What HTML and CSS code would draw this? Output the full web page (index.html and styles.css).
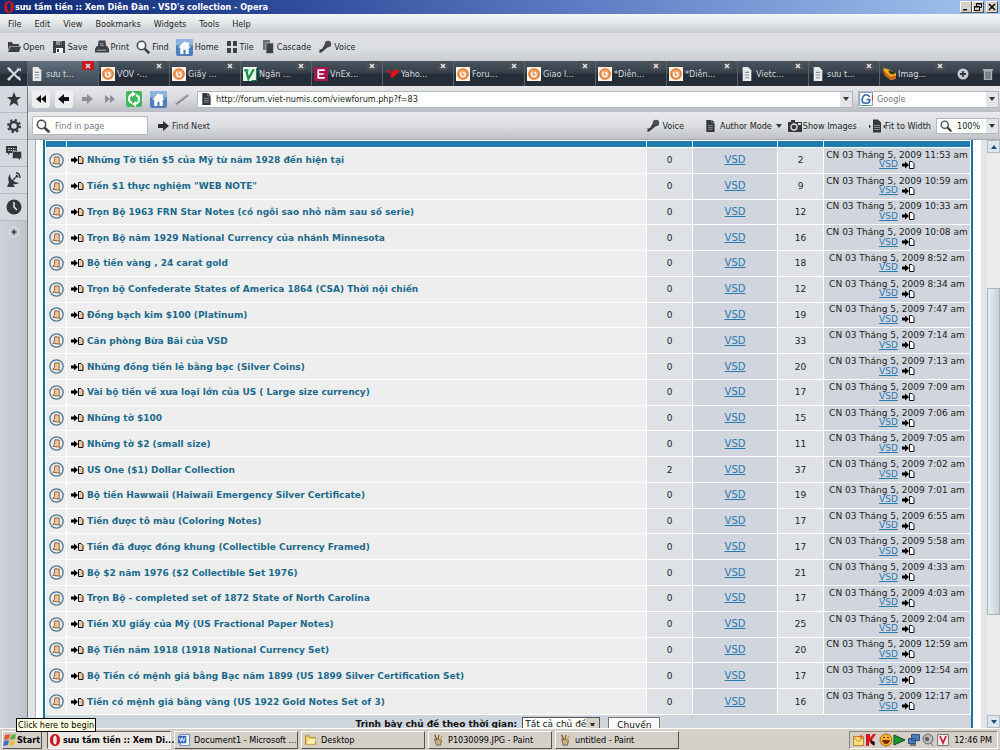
FILE: index.html
```html
<!DOCTYPE html>
<html lang="vi">
<head>
<meta charset="utf-8">
<title>sưu tầm tiền :: Xem Diễn Đàn - VSD's collection - Opera</title>
<link rel="stylesheet" href="styles.css">
</head>
<body>
<svg class="defs" aria-hidden="true">
  <symbol id="opera" viewBox="0 0 12 12"><path fill="#c8171e" fill-rule="evenodd" d="M6 0C9 0 11 2.500 11 6S9 12 6 12 1 9.500 1 6 3 0 6 0ZM6 1.500C4.700 1.500 4.200 3.500 4.200 6S4.700 10.500 6 10.500 7.800 8.500 7.800 6 7.300 1.500 6 1.500Z"/></symbol>
  <symbol id="folder" viewBox="0 0 14 12"><path fill="#3d4146" d="M1 1h4l1 2h6v2H3L1 9ZM3.500 5.500H14L12 11H1Z"/></symbol>
  <symbol id="save" viewBox="0 0 14 14"><path fill="#3d4146" d="M1 1h12v12H1Z"/><path fill="#f4f5f6" d="M4 8h7v5H4Z"/><path fill="#8d9299" d="M4 1h6v4H4Z"/><path fill="#3d4146" d="M8 2h1.500v2.500H8ZM5 9h2v3H5Z"/></symbol>
  <symbol id="printer" viewBox="0 0 15 14"><path fill="#3d4146" d="M4 0h7l1 6h1l2 3v4H0V9l2-3h1Z"/><path fill="#a9adb3" d="M5 3h4v1H5ZM5 5h5v1H5ZM2 10h10v1H2Z"/></symbol>
  <symbol id="lens" viewBox="0 0 14 14"><circle cx="5.500" cy="5.500" r="4.200" fill="#f7f8f9" stroke="#4a4e54" stroke-width="1.600"/><path stroke="#3d4146" stroke-width="2.600" stroke-linecap="round" d="m9.300 9.300 3.200 3.200"/></symbol>
  <symbol id="home" viewBox="0 0 16 16"><rect width="16" height="16" rx="2" fill="#4b7fbd"/><path fill="#8db3de" d="M0 2q0-2 2-2h12q2 0 2 2v4H0Z"/><path fill="#fff" d="M8 2 2 8h2v6h3v-4h2v4h3V8h2l-2-2V3h-2v1Z"/></symbol>
  <symbol id="tile" viewBox="0 0 12 12"><path fill="#3d4146" d="M1 0h4v5H1ZM7 0h4v5H7ZM1 7h4v5H1ZM7 7h4v5H7Z"/></symbol>
  <symbol id="cascade" viewBox="0 0 12 14"><path fill="#6d7278" d="M1 0h7v10H1Z"/><path fill="#3d4146" stroke="#c9ccd1" stroke-width=".7" d="M4 3h7.500v10.500H4Z"/></symbol>
  <symbol id="mic" viewBox="0 0 14 14"><circle cx="10" cy="4" r="3.200" fill="#4a4e54"/><path fill="#3d4146" d="m7 4 3 3-6 5-2 1-1-1 1-2H0l4-1Z"/></symbol>
  <symbol id="tools" viewBox="0 0 16 16"><path stroke="#d4d8dd" stroke-width="2" fill="none" d="m3 3 10 10M13 3 3 13"/><path fill="#d4d8dd" d="m1 2 2-1 3 3-2 2ZM11 1l1 3 3 1v-3l-2 1ZM11 12l2-2 2 3-1 2ZM1 13l2-2 2 2-2 2Z"/></symbol>
  <symbol id="page" viewBox="0 0 10 13"><path fill="#e9ebed" d="M1 0h5l3 3v10H1Z"/><path stroke="#858b92" d="M3 5h4M3 7.500h4M3 10h4"/></symbol>
  <symbol id="darkpage" viewBox="0 0 10 13"><path fill="#34383d" d="M1 0h5l4 4v9H1Z"/><path stroke="#a2a7ad" stroke-width=".8" d="M3 6h5M3 8h5M3 10h5M7 0v3h3"/></symbol>
  <symbol id="orange" viewBox="0 0 13 13"><path fill="#fff3e4" d="M0 0h13v13H0Z"/><circle cx="6.500" cy="6.500" r="4.800" fill="#f0a468" stroke="#e0702a" stroke-width="1.200"/><path fill="none" stroke="#fff" stroke-width="1.200" d="M4.500 4.500v2.500q0 2 2 2t2-2-2-2"/></symbol>
  <symbol id="greenv" viewBox="0 0 13 13"><path fill="#e9f6ec" d="M0 0h13v13H0Z"/><path fill="none" stroke="#148a43" stroke-width="2" d="M1 3h4M3 3l2 8 5-9"/><path stroke="#148a43" fill="none" d="M8 12.500h4.500V1"/></symbol>
  <symbol id="express" viewBox="0 0 13 13"><path fill="#a5174c" d="M0 0h13v13H0Z"/><path fill="none" stroke="#fff" stroke-width="1.600" d="M10 3H4v7h6M4 6.500h5"/></symbol>
  <symbol id="yahoo" viewBox="0 0 13 10"><path fill="#d9141b" d="M0 2h5l1 2 2-3h5l-1 3-5 5-2-2 1-2Z"/></symbol>
  <symbol id="shoe" viewBox="0 0 13 13"><path fill="#f0b41c" d="m1 1 5 1 7 4v5l-5 1-5-4Z"/><path fill="#c8641c" d="m1 3 7 6 5-1v3l-5 1-6-5Z"/><path fill="#342a1a" d="m6 3 6 2-1 2-4-1Z"/></symbol>
  <symbol id="add" viewBox="0 0 12 12"><circle cx="6" cy="6" r="5.500" fill="#c8ccd1"/><path stroke="#2d353e" stroke-width="1.800" d="M6 3v6M3 6h6"/></symbol>
  <symbol id="trash" viewBox="0 0 11 13"><path fill="#a9afb6" d="M0 1h11v2H0ZM1 3h9v10H1Z"/><path stroke="#49525c" d="M3.500 4v8M5.500 4v8M7.500 4v8"/></symbol>
  <symbol id="star" viewBox="0 0 16 16"><path fill="#34383d" d="m8 1 2 5h5l-4 3.500 1.500 5.500L8 12l-4.500 3L5 9.500 1 6h5Z"/></symbol>
  <symbol id="gear" viewBox="0 0 16 16"><circle cx="8" cy="8" r="4" fill="none" stroke="#34383d" stroke-width="2.400"/><circle cx="8" cy="8" r="6" fill="none" stroke="#34383d" stroke-width="2" stroke-dasharray="2.300 2.412"/></symbol>
  <symbol id="chat" viewBox="0 0 16 16"><path fill="#34383d" d="M0 1h11v7H4L2 10V8H0Z"/><path fill="#34383d" stroke="#c7cad0" stroke-width=".6" d="M6.500 6.500h9v7H14v2l-2-2H6.500Z"/><path stroke="#c7cad0" stroke-dasharray="1.500 1" d="M2 3.500h8M2 5.500h8"/></symbol>
  <symbol id="dish" viewBox="0 0 16 16"><path fill="#34383d" d="M4 2q0 8 9 9-3 2-6 1l2 3H1l2-5Q1 6 4 2Z"/><path stroke="#34383d" stroke-width="1.300" fill="none" d="m6 9 5-5M10 1q4 0 4 5M10 3.500q2 0 2 2"/></symbol>
  <symbol id="clock" viewBox="0 0 16 16"><circle cx="8" cy="8" r="7.500" fill="#34383d"/><path fill="none" stroke="#fff" stroke-width="1.300" d="M8 3v5l3 3"/></symbol>
  <symbol id="plus" viewBox="0 0 12 12"><circle cx="6" cy="6" r="5" fill="#c6c9d0" stroke="#dfe1e5"/><path stroke="#34383d" stroke-width="1.500" d="M6 3.500v5M3.500 6h5"/></symbol>
  <symbol id="rewind" viewBox="0 0 12 12"><path fill="#111" d="M6 2v8L1 6ZM11 2v8L6 6Z"/></symbol>
  <symbol id="forward" viewBox="0 0 12 12"><path fill="#8c9096" d="M1 2v8l5-4ZM6 2v8l5-4Z"/></symbol>
  <symbol id="left" viewBox="0 0 12 12"><path fill="#111" d="M6 1v3h5v4H6v3L0 6Z"/></symbol>
  <symbol id="right" viewBox="0 0 12 12"><path fill="currentColor" d="M6 1v3H1v4h5v3l6-5Z"/></symbol>
  <symbol id="reload" viewBox="0 0 16 16"><rect width="16" height="16" rx="2" fill="#41b85a"/><path fill="none" stroke="#fff" stroke-width="2" d="M7 3Q3 4 3 8q0 3 3 4M9 13q4-1 4-5 0-3-3-4"/><path fill="#fff" d="M6 0v6l4-3ZM10 10v6l-4-3Z"/></symbol>
  <symbol id="wand" viewBox="0 0 14 14"><path stroke="#85898f" stroke-width="2.200" d="M1 12 13 3"/><path stroke="#c4c7cb" d="M1 11 12 3"/></symbol>
  <symbol id="google" viewBox="0 0 13 13"><path fill="#fff" stroke="#8aa5c9" d="M.5.5h12v12H.5Z"/><path fill="none" stroke="#3562ae" stroke-width="1.500" d="M10 4.500Q9 2.500 6.500 2.500T3 6.500t3.500 4Q10 10.500 10 7H7"/><path stroke="#c54438" d="M12.500 3v5"/><path stroke="#3d9b4b" d="M3 12.500h6"/></symbol>
  <symbol id="camera" viewBox="0 0 14 12"><path fill="#34383d" d="M0 2h3V0h4v2h7v10H0Z"/><circle cx="6" cy="7" r="3" fill="none" stroke="#d9dcdf" stroke-width="1.300"/><path fill="#d9dcdf" d="M10 3h3v2h-3Z"/></symbol>
  <symbol id="fit" viewBox="0 0 16 13"><path fill="#34383d" d="M4 0h5l3 3v10H4ZM0 5l2 2-2 2ZM16 5l-2 2 2 2Z"/><path stroke="#a2a7ad" stroke-width=".8" d="M5 6h6M5 8h6M5 10h6"/></symbol>
  <symbol id="bell" viewBox="0 0 14 14"><circle cx="7" cy="7" r="6.200" fill="#e8ecef" stroke="#51788f" stroke-width="1.200"/><path fill="#f1c498" stroke="#8c6143" stroke-width=".9" d="m5.500 3.500 4 .3V9l1 1.500-7-1L5 8Z"/></symbol>
  <symbol id="jump" viewBox="0 0 14 10"><path fill="#000" d="M1 3.500h3V1.500L8 5 4 8.500v-2H1Z"/><path fill="var(--sheet)" stroke="#111" d="M8.500 1.500h2.500l2 2v5H8.500Z"/></symbol>
  <symbol id="windows" viewBox="0 0 14 14"><path fill="#e4562b" d="m2 2 5-1-1 5-5 1Z"/><path fill="#62a93c" d="m8 2 5-1-1 5-5 1Z"/><path fill="#3c70d0" d="m1 8 5-1-1 5-5 1Z"/><path fill="#eebc2e" d="m7 8 5-1-1 5-5 1Z"/></symbol>
  <symbol id="word" viewBox="0 0 13 13"><path fill="#f7fafc" stroke="#5e83c3" d="M2.500.5h10v12h-10Z"/><path fill="#3668b8" d="M0 2h9v8H0Z"/><path fill="none" stroke="#fff" d="m1.500 4 1.500 4 1.500-4L6 8l1.500-4"/></symbol>
  <symbol id="ydir" viewBox="0 0 13 12"><path fill="#f4d866" stroke="#a68528" d="M.5 1.500h4l1 2h6v7H.5Z"/><path fill="#fff4ae" d="M4 5h8l-2 5H2Z"/></symbol>
  <symbol id="paint" viewBox="0 0 12 14"><path fill="#c8b08a" stroke="#6d5a45" d="m2 6 8 1-1 6H4Z"/><path stroke="#bd3c2d" stroke-width="1.600" d="M5 7 2 1"/><path stroke="#3d8e55" stroke-width="1.600" d="m6 7 1-6"/><path stroke="#e39a2a" stroke-width="1.600" d="m8 7 3-5"/></symbol>
  <symbol id="tray" viewBox="0 0 98 14">
    <path fill="#ffe07a" stroke="#b9862e" d="M1.500 3.500h10v9h-10Z"/><path fill="none" stroke="#b9862e" d="m1.500 4 5 5 5-5"/><path fill="#e8632c" d="m9 1 1 2h2l-2 1 1 2-2-1-2 1 1-2-2-1h2Z"/>
    <path fill="#d41920" d="M14 1h4v4l3-4h3l-4 6 3 5-4-1-2-3v5h-3Z"/><path fill="#111" d="m18 7 5 2-1 4-2-2Z"/>
    <circle cx="34" cy="7" r="6" fill="#f2b52d" stroke="#b1661b"/><path fill="#7d2710" d="M30 7h8q-1 4-4 4t-4-4ZM31 4h2v1h-2ZM35 4h2v1h-2Z"/>
    <path fill="#159b2a" stroke="#0b4914" d="m42 2 11 5-11 5Z"/>
    <path fill="#4b7cc4" stroke="#30507d" d="M59.500 1.500h8v6h-8ZM56.500 5.500h7v5h-7Z"/><path fill="#777" d="M58 11h6v2h-6Z"/>
    <circle cx="76" cy="6" r="5" fill="#b8b8bd" stroke="#64646c"/><circle cx="75" cy="6" r="2" fill="#55555c"/><path stroke="#777" d="m79 10 2 3"/>
    <path fill="#f8e9ea" stroke="#777" d="M85.500 1.500h11v11h-11Z"/><path fill="none" stroke="#c9262e" stroke-width="1.800" d="m88 3 3 7 3-7"/>
  </symbol>
</svg>

<header class="titlebar">
  <svg class="i12"><use href="#opera"/></svg>
  <h1>sưu tầm tiền :: Xem Diễn Đàn - VSD's collection - Opera</h1>
  <div class="winbtns">
    <button aria-label="Minimize"><svg viewBox="0 0 8 8"><path fill="#000" d="M1 6h4v1.500H1Z"/></svg></button>
    <button aria-label="Restore"><svg viewBox="0 0 8 8"><path fill="none" stroke="#000" d="M2.500 3V.5h5v4H6M.5 3.500h5v4h-5ZM.5 4h5M2.500 1h5"/></svg></button>
    <button class="close" aria-label="Close"><svg viewBox="0 0 8 8"><path stroke="#000" stroke-width="1.500" d="m1 1 6 6M7 1 1 7"/></svg></button>
  </div>
</header>
<nav class="menubar">
  <button>File</button><button>Edit</button><button>View</button><button>Bookmarks</button><button>Widgets</button><button>Tools</button><button>Help</button>
</nav>
<div class="toolbar">
  <button><svg class="i14"><use href="#folder"/></svg>Open</button>
  <button><svg class="i14"><use href="#save"/></svg>Save</button>
  <button><svg class="i14"><use href="#printer"/></svg>Print</button>
  <button><svg class="i14"><use href="#lens"/></svg>Find</button>
  <button><svg class="i17"><use href="#home"/></svg>Home</button>
  <button><svg class="i12"><use href="#tile"/></svg>Tile</button>
  <button><svg class="i14"><use href="#cascade"/></svg>Cascade</button>
  <button><svg class="i14"><use href="#mic"/></svg>Voice</button>
</div>
<div class="tabstrip">
  <button class="tabtools" aria-label="Tools"><svg class="i16"><use href="#tools"/></svg></button>
  <div class="tabs" id="tabs"></div>
  <button class="tabend" aria-label="New tab"><svg class="i12"><use href="#add"/></svg></button>
  <button class="tabend" aria-label="Closed tabs"><svg class="i12"><use href="#trash"/></svg></button>
</div>

<div class="main">
  <aside class="panels">
    <button aria-label="Bookmarks"><svg class="i16"><use href="#star"/></svg></button>
    <button aria-label="Settings"><svg class="i16"><use href="#gear"/></svg></button>
    <button aria-label="Chat"><svg class="i16"><use href="#chat"/></svg></button>
    <button aria-label="Feeds"><svg class="i16"><use href="#dish"/></svg></button>
    <button aria-label="History"><svg class="i16"><use href="#clock"/></svg></button>
    <button class="plain" aria-label="Add panel"><svg class="i12"><use href="#plus"/></svg></button>
  </aside>
  <div class="pane">
    <div class="address">
      <button class="nav lit" aria-label="Rewind"><svg class="i12"><use href="#rewind"/></svg></button>
      <button class="nav lit" aria-label="Back"><svg class="i12"><use href="#left"/></svg></button>
      <button class="nav dim" aria-label="Forward"><svg class="i12"><use href="#right"/></svg></button>
      <button class="nav" aria-label="Fast forward"><svg class="i12"><use href="#forward"/></svg></button>
      <button class="nav" aria-label="Reload"><svg class="i16"><use href="#reload"/></svg></button>
      <button class="nav" aria-label="Home"><svg class="i17"><use href="#home"/></svg></button>
      <button class="nav" aria-label="Wand"><svg class="i14"><use href="#wand"/></svg></button>
      <div class="field url"><svg class="i12"><use href="#darkpage"/></svg><input aria-label="Address" value="http://forum.viet-numis.com/viewforum.php?f=83"><button class="drop" aria-label="History list"></button></div>
      <div class="field search"><svg class="i14"><use href="#google"/></svg><input aria-label="Search" placeholder="Google"><button class="drop" aria-label="Engines"></button></div>
    </div>
    <div class="findbar">
      <div class="field find"><svg class="i14"><use href="#lens"/></svg><input aria-label="Find in page" placeholder="Find in page"></div>
      <button class="next"><svg class="i12"><use href="#right"/></svg>Find Next</button>
      <div class="view">
        <button class="voice"><svg class="i14"><use href="#mic"/></svg>Voice</button>
        <button class="mode"><svg class="i12"><use href="#darkpage"/></svg>Author Mode<span class="caret"></span></button>
        <button><svg class="i14"><use href="#camera"/></svg>Show Images</button>
        <button class="fit"><svg class="i16"><use href="#fit"/></svg>Fit to Width</button>
        <div class="field zoom"><svg class="i12"><use href="#lens"/></svg><input aria-label="Zoom" value="100%"><button class="drop" aria-label="Zoom levels"></button></div>
      </div>
    </div>
    <div class="viewport">
      <main class="sheet">
        <div class="forum">
          <table>
            <thead><tr><th></th><th></th><th></th><th></th><th></th><th></th></tr></thead>
            <tbody id="topics"></tbody>
          </table>
          <form class="sort">
            <label for="days">Trình bày chủ đề theo thời gian:</label>
            <select id="days"><option>Tất cả chủ đề</option></select>
            <button type="button">Chuyển</button>
          </form>
        </div>
      </main>
      <div class="scroll"><button class="up" aria-label="Scroll up"></button><div class="thumb"></div><button class="down" aria-label="Scroll down"></button></div>
    </div>
  </div>
</div>

<footer class="taskbar">
  <button class="start"><svg class="i14"><use href="#windows"/></svg>Start</button>
  <button class="task active"><svg class="i12"><use href="#opera"/></svg>sưu tầm tiền :: Xem Di...</button>
  <button class="task"><svg class="i12"><use href="#word"/></svg>Document1 - Microsoft ...</button>
  <button class="task"><svg class="i12"><use href="#ydir"/></svg>Desktop</button>
  <button class="task"><svg class="i12"><use href="#paint"/></svg>P1030099.JPG - Paint</button>
  <button class="task"><svg class="i12"><use href="#paint"/></svg>untitled - Paint</button>
  <div class="systray"><svg><use href="#tray"/></svg><time>12:46 PM</time></div>
  <div class="tip" role="tooltip">Click here to begin</div>
</footer>
<script src="app.js"></script>
</body>
</html>
```
FILE: styles.css
```css
* { box-sizing: border-box; }
html, body { height: 100%; }
body {
  margin: 0; display: flex; flex-direction: column; overflow: hidden;
  font: 9px/12px "DejaVu Sans Condensed", "DejaVu Sans", sans-serif; font-stretch: condensed;
  color: #1c1f23; background: #d4d0c8;
}
button, input, select { font: inherit; color: inherit; margin: 0; padding: 0; border: 0; background: none; border-radius: 0; }
button { display: flex; align-items: center; gap: 4px; white-space: nowrap; }
input { min-width: 0; flex: 1; outline: 0; }
input::placeholder { color: #74787d; opacity: 1; }
svg { display: block; flex: none; }
.defs { display: none; }
.i12 { width: 12px; height: 12px; }
.i14 { width: 14px; height: 14px; }
.i16 { width: 16px; height: 16px; }
.i17 { width: 17px; height: 17px; }

.titlebar { height: 14px; flex: none; display: flex; align-items: center; padding: 0 2px 0 3px; background: linear-gradient(90deg, #0d2a74, #2e4e9c 30%, #5f7fc6 60%, #a3c4ee); color: #fff; }
.titlebar h1 { margin: 0; flex: 1; font-size: 9px; line-height: 12px; font-weight: bold; }
.winbtns { display: flex; }
.winbtns button { width: 12px; height: 12px; justify-content: center; background: #d4d0c8; border: 1px solid; border-color: #fff #55534e #55534e #fff; }
.winbtns .close { margin-left: 2px; }
.winbtns svg { width: 8px; height: 8px; }

.menubar { height: 19px; flex: none; display: flex; align-items: center; gap: 13px; padding-left: 8px; background: linear-gradient(#f5f6f7, #e4e7e9 45%, #c6cbcf); }
.toolbar { height: 28px; flex: none; display: flex; align-items: center; gap: 7px; padding-left: 7px; background: linear-gradient(#dfe1e4, #d9dce0 60%, #c9ccd0); }
.toolbar button { gap: 2px; }

.tabstrip { height: 25px; flex: none; display: flex; background: linear-gradient(#4a545f, #36414c 45%, #242d36 55%, #27303a); color: #d6dade; }
.tabtools { width: 27px; justify-content: center; }
.tabs { flex: 1; display: flex; }
.tab { flex: 1; display: flex; align-items: center; position: relative; border-left: 1px solid #59636e; min-width: 0; }
.tab > button:first-child { gap: 2px; padding-left: 2px; }
.tab.on { background: linear-gradient(#65717e, #4c5865 50%, #3c4854); }
.shut { position: absolute; right: 4px; top: 0; width: 12px; height: 9px; justify-content: center; background: #4a4f55; border-radius: 0 0 2px 2px; }
.on .shut { background: #c21d25; }
.shut svg { width: 6px; height: 6px; }
.tabend { width: 25px; justify-content: center; }

.main { flex: 1; display: flex; min-height: 0; }
.panels { width: 28px; flex: none; background: linear-gradient(90deg, #cfd2da, #bfc3cd); border-right: 1px solid #777b81; }
.panels button { width: 100%; height: 27px; justify-content: center; background: #d5d8df; border-bottom: 1px solid #b7bac1; }
.panels .plain { background: none; border: 0; height: 22px; }
.pane { flex: 1; display: flex; flex-direction: column; min-width: 0; }
.address { height: 26px; flex: none; display: flex; align-items: center; padding: 0 1px 0 4px; background: linear-gradient(#e6e8eb, #d8dade 50%, #b9bcc3); }
.nav { width: 18px; height: 18px; margin-right: 6px; justify-content: center; flex: none; color: #111; }
.nav:nth-child(-n+3) { margin-right: 5px; }
.lit { background: #eceef0; border-radius: 3px; }
.dim { color: #8c9096; }
.field { display: flex; align-items: center; background: #fff; border: 1px solid #b4b8bd; }
.url { flex: 1; height: 17px; gap: 4px; padding-left: 2px; margin-right: 5px; }
.search { width: 141px; height: 17px; gap: 4px; }
.drop { width: 12px; height: 100%; background: #e3e5e8; justify-content: center; flex: none; }
.drop::before, .caret { content: ""; border: 3px solid transparent; border-top: 4px solid #34383d; border-bottom: 0; }
.findbar { height: 28px; flex: none; display: flex; align-items: center; padding: 0 1px 0 4px; background: linear-gradient(#e8e9eb, #dcdee1 50%, #bfc2c6); border-bottom: 1px solid #a8acb1; }
.find { width: 116px; height: 19px; gap: 5px; padding-left: 3px; border-radius: 2px; }
.next { margin-left: 9px; color: #2c3035; gap: 3px; }
.view { margin-left: auto; display: flex; align-items: center; }
.view button { gap: 1px; margin-right: 8px; }
.view .voice { margin-right: 20px; gap: 2px; }
.view .mode { gap: 4px; margin-right: 6px; }
.view .fit { gap: 0; margin-left: 4px; margin-right: 5px; }
.zoom { width: 63px; height: 16px; gap: 5px; padding-left: 3px; }
.view .drop { margin: 0; }

.viewport { flex: 1; display: flex; min-height: 0; background: #e4e4e4; padding-left: 7px; }
.sheet { flex: 1; background: #fff; border-left: 1px solid #a9b6be; padding: 0 8px 0 7px; overflow: hidden; margin-right: 6px; }
.forum { border: solid #14749c; border-width: 0 2px; background: #fff; font-family: "DejaVu Sans", sans-serif; font-stretch: normal; }
table { width: 100%; height: 575px; border-spacing: 1px; table-layout: fixed; }
th { height: 6px; padding: 0; background: #1f7cab; }
th:nth-child(1) { width: 20px; }
th:nth-child(3) { width: 45px; }
th:nth-child(4) { width: 84px; }
th:nth-child(5) { width: 45px; }
th:nth-child(6) { width: 146px; }
td { padding: 0; text-align: center; vertical-align: middle; font-size: 9px; line-height: 10px; }
td:nth-child(-n+2) { background: #eee; }
td:nth-child(3), td:nth-child(5) { background: #dee2e7; }
td:nth-child(4), td:nth-child(6) { background: #d1d5dd; }
td a { color: #2a7ab0; }
td:nth-child(4) a { font-size: 10px; }
.subject { display: flex; align-items: center; gap: 3px; padding-left: 3px; white-space: nowrap; }
.subject a { color: #1b6a8c; font-size: 9px; line-height: 12px; font-weight: bold; text-decoration: none; }
.bell { width: 15px; height: 15px; margin: 0 auto; }
.jump { width: 14px; height: 10px; --sheet: #f1c9a0; }
.last { white-space: nowrap; line-height: 9px; }
.who { display: flex; justify-content: center; align-items: center; gap: 3px; }
.who .jump { --sheet: #fff; }
.sort { height: 30px; background: #cfd5dc; display: flex; justify-content: center; gap: 5px; padding-top: 2px; color: #111; }
.sort label { font-weight: bold; line-height: 15px; }
.sort select { height: 15px; width: 78px; padding-left: 2px; font-size: 9px; line-height: 13px; appearance: none; border: 1px solid #555; background: linear-gradient(#333, #333) right 4px top 5px / 5px 1px no-repeat, linear-gradient(#333, #333) right 5px top 6px / 3px 2px no-repeat, linear-gradient(#d4d0c8, #d4d0c8) right / 13px 100% no-repeat, #fff; }
.sort button { height: 15px; padding: 0 8px; margin-left: 3px; background: #fafafa; border: 1px solid #777; line-height: 12px; }
.scroll { width: 13px; display: flex; flex-direction: column; background: #ebebeb; }
.scroll button { height: 13px; justify-content: center; background: #dce6ec; border: 1px solid #b2bdc4; }
.up::before, .down::before { content: ""; border: 3px solid transparent; border-bottom: 4px solid #17507c; border-top: 0; }
.down::before { border-top: 4px solid #17507c; border-bottom: 0; }
.thumb { margin-top: 135px; height: 327px; background: linear-gradient(90deg, #e8edf0, #c9d0d5); border: 1px solid #aab3b9; }
.scroll .down { margin-top: auto; }

.taskbar { height: 22px; flex: none; position: relative; display: flex; align-items: center; gap: 3px; padding: 1px 2px 0; background: #d4d0c8; border-top: 1px solid #fff; color: #000; }
.taskbar button { height: 18px; border: 1px solid; border-color: #fff #55534e #55534e #fff; padding: 0 3px; }
.taskbar .start { width: 40px; font-weight: bold; gap: 0; padding: 0; margin-right: 2px; }
.task { width: 124px; flex: none; }
.taskbar .active { gap: 2px; padding: 0 1px; font-weight: bold; background: #ece9e4; border-color: #55534e #fff #fff #55534e; }
.systray { margin-left: auto; height: 18px; display: flex; align-items: center; gap: 4px; padding: 0 5px 0 2px; border: 1px solid; border-color: #8a8780 #fff #fff #8a8780; white-space: nowrap; }
.systray svg { width: 98px; height: 14px; }
.tip { position: absolute; left: 16px; top: -11px; padding: 0 1px; background: #ffffe1; border: 1px solid #000; line-height: 12px; white-space: nowrap; }
```
FILE: app.js
```js
const icon = (name, cls) => `<svg class="${cls}"><use href="#${name}"/></svg>`;

const tabs = [
  ["page", "sưu t..."], ["orange", "VOV -..."], ["orange", "Giấy ..."], ["greenv", "Ngân ..."],
  ["express", "VnEx..."], ["yahoo", "Yaho..."], ["orange", "Foru..."], ["orange", "Giao l..."],
  ["orange", "*Diễn..."], ["orange", "*Diễn..."], ["page", "Vietc..."], ["page", "sưu t..."], ["shoe", "Imag..."]
];
const cross = '<svg viewBox="0 0 6 6"><path stroke="#e6e6e6" stroke-width="1.500" d="m1 1 4 4M5 1 1 5"/></svg>';
document.getElementById("tabs").innerHTML = tabs.map(([name, text], i) =>
  `<div class="tab${i ? "" : " on"}"><button>${icon(name, "i14")}${text}</button><button class="shut" aria-label="Close tab">${cross}</button></div>`).join("");

const topics = [
  ["Những Tờ tiền $5 của Mỹ từ năm 1928 đến hiện tại", 0, 2, "11:53"],
  ["Tiền $1 thực nghiệm \"WEB NOTE\"", 0, 9, "10:59"],
  ["Trọn Bộ 1963 FRN Star Notes (có ngôi sao nhỏ nằm sau số serie)", 0, 12, "10:33"],
  ["Trọn Bộ năm 1929 National Currency của nhánh Minnesota", 0, 16, "10:08"],
  ["Bộ tiền vàng , 24 carat gold", 0, 18, "8:52"],
  ["Trọn bộ Confederate States of America 1864 (CSA) Thời nội chiến", 0, 12, "8:34"],
  ["Đồng bạch kim $100 (Platinum)", 0, 19, "7:47"],
  ["Căn phòng Bừa Bãi của VSD", 0, 33, "7:14"],
  ["Những đồng tiền lẻ bằng bạc (Silver Coins)", 0, 20, "7:13"],
  ["Vài bộ tiền về xưa loại lớn của US ( Large size currency)", 0, 17, "7:09"],
  ["Những tờ $100", 0, 15, "7:06"],
  ["Những tờ $2 (small size)", 0, 11, "7:05"],
  ["US One ($1) Dollar Collection", 2, 37, "7:02"],
  ["Bộ tiền Hawwaii (Haiwaii Emergency Silver Certificate)", 0, 19, "7:01"],
  ["Tiền được tô màu (Coloring Notes)", 0, 17, "6:55"],
  ["Tiền đã được đóng khung (Collectible Currency Framed)", 0, 17, "5:58"],
  ["Bộ $2 năm 1976 ($2 Collectible Set 1976)", 0, 21, "4:33"],
  ["Trọn Bộ - completed set of 1872 State of North Carolina", 0, 17, "4:03"],
  ["Tiền XU giấy của Mỹ (US Fractional Paper Notes)", 0, 25, "2:04"],
  ["Bộ Tiền năm 1918 (1918 National Currency Set)", 0, 20, "12:59"],
  ["Bộ Tiền có mệnh giá bằng Bạc năm 1899 (US 1899 Silver Certification Set)", 0, 17, "12:54"],
  ["Tiền có mệnh giá bằng vàng (US 1922 Gold Notes Set of 3)", 0, 16, "12:17"]
];
document.getElementById("topics").innerHTML = topics.map(([title, replies, views, time]) => `<tr>
  <td>${icon("bell", "bell")}</td>
  <td><div class="subject">${icon("jump", "jump")}<a href="#">${title}</a></div></td>
  <td>${replies}</td><td><a href="#">VSD</a></td><td>${views}</td>
  <td class="last">CN 03 Tháng 5, 2009 ${time} am<div class="who"><a href="#">VSD</a>${icon("jump", "jump")}</div></td>
</tr>`).join("");
```
